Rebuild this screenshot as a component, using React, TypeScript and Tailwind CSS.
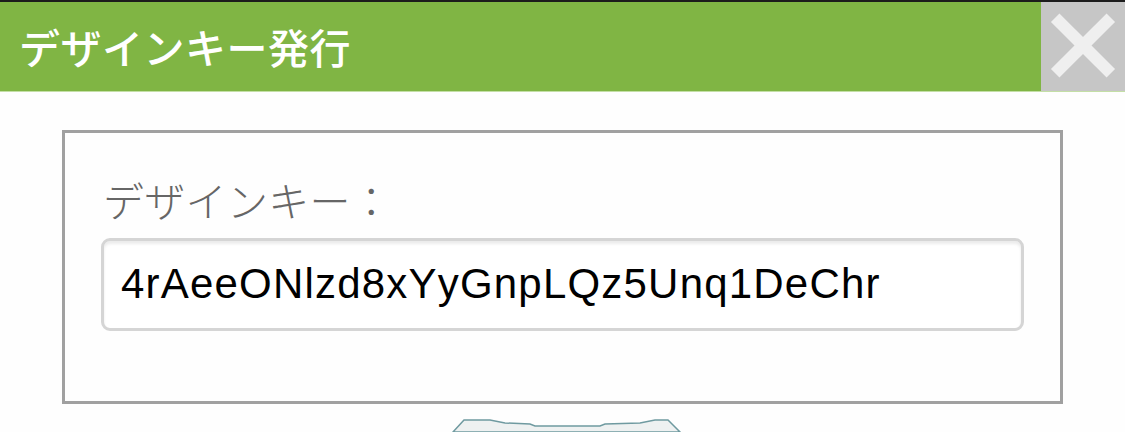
import React from "react";

export default function App() {
  return (
    <div className="w-[1125px] h-[432px] overflow-hidden bg-[#fefefe] flex flex-col">
      <div className="h-[2px] bg-[#1c1c1c]" />
      <div className="h-[89px] flex bg-[#80b544]">
        <div
          className="flex-1 flex items-center pl-[19px] text-white text-[41px] font-medium leading-none tracking-[0.5px]"
          style={{ fontFamily: '"Noto Sans CJK JP", "Noto Sans", sans-serif' }}
        >
          デザインキー発行
        </div>
        <div className="w-[84px] h-full bg-[#c6c6c6] flex items-center justify-center">
          <svg width="84" height="89" viewBox="0 0 84 89">
            <line x1="14.2" y1="15.7" x2="69.8" y2="71.3" stroke="#efefef" strokeWidth="12" />
            <line x1="69.8" y1="15.7" x2="14.2" y2="71.3" stroke="#efefef" strokeWidth="12" />
          </svg>
        </div>
      </div>
      <div className="h-[1px] bg-[#c4dfa6]" />
      <div className="ml-[62px] mt-[38px] w-[1001px] h-[275px] border-[3px] border-[#a0a0a0] px-[36px] pt-[42px]">
        <div
          className="text-[41px] leading-[48px] text-[#666666] font-light pl-[2px] tracking-[0.3px]"
          style={{ fontFamily: '"Noto Sans CJK JP", "Noto Sans", sans-serif' }}
        >
          デザインキー：
        </div>
        <div className="mt-[15px] h-[93px] rounded-[9px] border-[3px] border-[#d5d5d5] bg-white shadow-[inset_0_3px_3px_rgba(0,0,0,0.08)] flex items-center pl-[17px]">
          <span
            className="text-[42px] leading-none text-black tracking-[1.2px]"
            style={{ fontFamily: '"Liberation Sans", Arial, sans-serif' }}
          >
            4rAeeONlzd8xYyGnpLQz5Unq1DeChr
          </span>
        </div>
      </div>
      <div className="mt-[14px] flex justify-center pl-[6px]">
        <svg width="232" height="14" viewBox="0 0 232 14">
          <path
            d="M3 14 L14 2 L40 2 L55 5 L80 6 L85 8 L150 8 L155 6 L190 5 L205 2 L218 2 L230 14 Z"
            fill="#eef1f1"
            stroke="#6f9aa0"
            strokeWidth="1.5"
          />
        </svg>
      </div>
    </div>
  );
}
